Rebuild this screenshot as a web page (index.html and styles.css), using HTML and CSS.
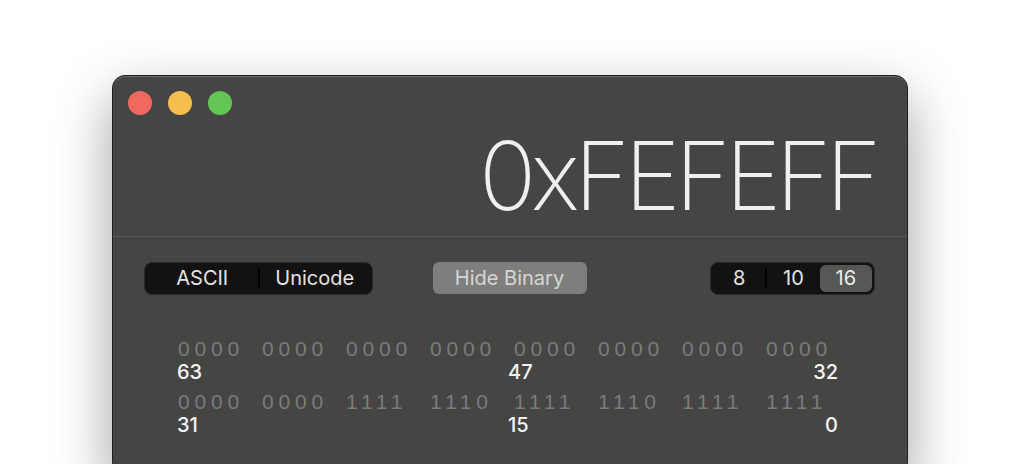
FILE: index.html
```html
<!DOCTYPE html>
<html>
	<head>
		<meta charset="UTF-8">
		<title>Hex</title>
		<link rel="stylesheet" href="styles.css">
	</head>
	<body>
		<div class="window">
			<div class="titlebar">
				<span class="light red"></span>
				<span class="light yellow"></span>
				<span class="light green"></span>
			</div>
			<div class="display">0xFEFEFF</div>
			<div class="controls">
				<div class="segmented charset">
					<span class="seg">ASCII</span>
					<span class="divider"></span>
					<span class="seg">Unicode</span>
				</div>
				<button class="toggle">Hide Binary</button>
				<div class="segmented radix">
					<span class="seg">8</span>
					<span class="divider"></span>
					<span class="seg">10</span>
					<span class="seg active">16</span>
				</div>
			</div>
			<div class="bits">
				<div class="bit-row">
					<span>0000</span><span>0000</span><span>0000</span><span>0000</span>
					<span>0000</span><span>0000</span><span>0000</span><span>0000</span>
				</div>
				<div class="bit-labels">
					<span class="first">63</span>
					<span class="mid">47</span>
					<span class="last">32</span>
				</div>
				<div class="bit-row">
					<span>0000</span><span>0000</span><span>1111</span><span>1110</span>
					<span>1111</span><span>1110</span><span>1111</span><span>1111</span>
				</div>
				<div class="bit-labels">
					<span class="first">31</span>
					<span class="mid">15</span>
					<span class="last">0</span>
				</div>
			</div>
		</div>
	</body>
</html>
```

FILE: styles.css
```css
*{
	margin: 0;
	padding: 0;
	box-sizing: border-box;
}
body{
	background-color: #fff;
	padding: 75px 0 0 112px;
	overflow: hidden;
	font-family: Inter, "Liberation Sans", sans-serif;
}
.window{
	width: 796px;
	height: 400px;
	background-color: #454544;
	border: 1px solid #1e1e1e;
	border-radius: 13px;
	box-shadow: inset 0 1px 0 #6a6a69, 0 22px 55px rgba(0, 0, 0, 0.38);
}
.titlebar{
	display: flex;
	gap: 16px;
	padding: 15px 0 0 15px;
}
.light{
	width: 24px;
	height: 24px;
	border-radius: 50%;
}
.red{ background-color: #ee6a5f; }
.yellow{ background-color: #f5be4f; }
.green{ background-color: #62c554; }

/* big hex readout */
.display{
	text-align: right;
	padding: 6px 31px 0 0;
	height: 122px;
	font-size: 95px;
	font-weight: 200;
	line-height: 110px;
	letter-spacing: -5.5px;
	color: #efefef;
	border-bottom: 1px solid #5a5a59;
}

.controls{
	display: grid;
	grid-template-columns: 1fr auto 1fr;
	align-items: center;
	padding: 25px 32px 0 31px;
}
.segmented{
	display: flex;
	align-items: center;
	height: 33px;
	background-color: #121212;
	border: 1px solid #2a2a2a;
	border-radius: 8px;
	padding: 2px;
	font-size: 20px;
	color: #e4e4e4;
}
.seg{
	flex: 1;
	text-align: center;
	line-height: 27px;
	height: 27px;
	border-radius: 6px;
}
.seg.active{
	background-color: #575756;
	color: #ececec;
}
.divider{
	width: 2px;
	height: 19px;
	background-color: #000;
}
.charset{
	justify-self: start;
	width: 229px;
}
.radix{
	justify-self: end;
	width: 165px;
}
.toggle{
	width: 154px;
	height: 32px;
	margin-top: -2px;
	border: none;
	border-radius: 6px;
	background-color: #7e7e7d;
	color: #d6d6d6;
	font-family: inherit;
	font-size: 20px;
}

/* binary grid */
.bits{
	padding: 43px 0 0 65px;
}
.bit-row{
	display: flex;
	gap: 18px;
	font-family: "Liberation Sans", sans-serif;
	font-size: 21px;
	line-height: 22px;
	color: #7b7b7a;
}
.bit-row span{
	width: 66px;
	letter-spacing: 4.8px;
}
.bit-labels{
	display: grid;
	grid-template-columns: repeat(8, 66px);
	column-gap: 18px;
	margin-bottom: 7px;
	font-size: 20px;
	line-height: 24px;
	font-weight: 500;
	color: #f4f4f4;
}
.bit-labels .first{
	grid-column: 1;
	margin-left: -1px;
}
.bit-labels .mid{
	grid-column: 5;
	margin-left: -6px;
}
.bit-labels .last{
	grid-column: 8;
	justify-self: end;
	margin-right: -6px;
}
```
